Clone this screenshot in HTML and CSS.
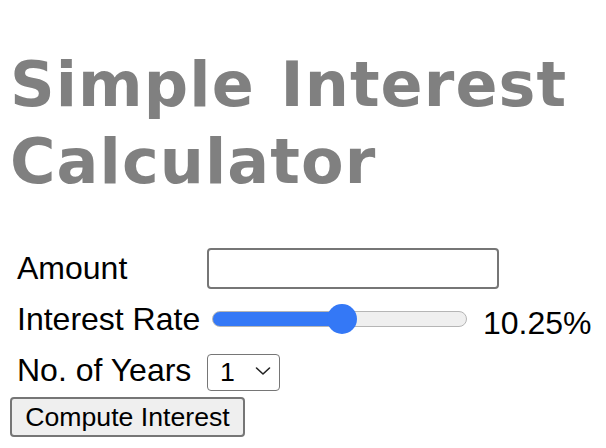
FILE: index.html
```html
<!DOCTYPE html>
<html>
<head>
<meta charset="utf-8">
<link rel="stylesheet" href="styles.css">
<title>Simple Interest Calculator</title>
</head>
<body>
<h1 class="title">Simple Interest Calculator</h1>
<form class="calc">
  <div class="grid">
    <label class="lbl" for="amount">Amount</label>
    <div class="cell"><input class="amount" id="amount" type="text"></div>
    <label class="lbl" for="rate">Interest Rate</label>
    <div class="cell rate-cell">
      <input class="rate" id="rate" type="range" min="0" max="20" step="0.25" value="10.25">
      <span class="rate-val">10.25%</span>
    </div>
    <label class="lbl" for="years">No. of Years</label>
    <div class="cell">
      <div class="select-wrap">
        <select class="years" id="years">
          <option>1</option>
          <option>2</option>
          <option>3</option>
        </select>
        <svg class="chev" width="16" height="10" viewBox="0 0 16 10"><path d="M1.5 2 L8 8 L14.5 2" fill="none" stroke="#222" stroke-width="1.6" stroke-linecap="round" stroke-linejoin="round"/></svg>
      </div>
    </div>
  </div>
  <button class="btn" type="button">Compute Interest</button>
</form>
</body>
</html>
```
FILE: styles.css
```css
html, body { background: #fff; }
body {
  margin: 8px 8px 8px 10px;
  font-family: "Liberation Sans", Arial, sans-serif;
  font-size: 32px;
  color: #000;
}
.title {
  font-family: "DejaVu Sans", Verdana, sans-serif;
  font-weight: bold;
  font-size: 62px;
  line-height: 77px;
  letter-spacing: 1.1px;
  word-spacing: 3px;
  color: #808080;
  margin: 38px 0 0 0;
  height: 154px;
  padding-bottom: 46px;
}
.calc { margin: 0; }
.grid {
  display: grid;
  grid-template-columns: 197px 1fr;
  grid-template-rows: 45px 48px 47px;
  row-gap: 4px;
  align-items: center;
}
.lbl { padding-left: 7px; white-space: nowrap; }
.cell { display: flex; align-items: center; }
.amount {
  box-sizing: border-box;
  width: 292px;
  height: 41px;
  margin: 0;
  border: 2px solid #767676;
  border-radius: 4px;
  font: inherit;
  padding: 0 8px;
  background: #fff;
}
.rate {
  -webkit-appearance: none;
  appearance: none;
  width: 255px;
  height: 32px;
  margin: 0 0 0 5px;
  background: transparent;
}
.rate::-webkit-slider-runnable-track {
  height: 16px;
  border-radius: 8px;
  box-sizing: border-box;
  border: 1px solid #b5b5b5;
  background: linear-gradient(to right, #3478f6 0, #3478f6 52%, #efefef 52%, #efefef 100%);
}
.rate::-webkit-slider-thumb {
  -webkit-appearance: none;
  width: 30px;
  height: 30px;
  border-radius: 50%;
  background: #3478f6;
  border: none;
  margin-top: -8px;
}
.rate-val { padding-left: 16px; padding-top: 8px; white-space: nowrap; }
.select-wrap {
  position: relative;
  width: 73px;
  height: 37px;
}
.years {
  -webkit-appearance: none;
  appearance: none;
  box-sizing: border-box;
  width: 73px;
  height: 37px;
  margin: 0;
  border: 1.5px solid #767676;
  border-radius: 4px;
  background: #fff;
  font-family: "Liberation Sans", Arial, sans-serif;
  font-size: 26.67px;
  padding: 0 0 0 12px;
  color: #000;
}
.chev {
  position: absolute;
  right: 9px;
  top: 14px;
  pointer-events: none;
}
.btn {
  display: block;
  box-sizing: border-box;
  width: 235px;
  height: 40px;
  margin: 3px 0 0 0;
  padding: 0;
  border: 2px solid #767676;
  border-radius: 4px;
  background: #efefef;
  font-family: "Liberation Sans", Arial, sans-serif;
  font-size: 26.67px;
  color: #000;
}
```
